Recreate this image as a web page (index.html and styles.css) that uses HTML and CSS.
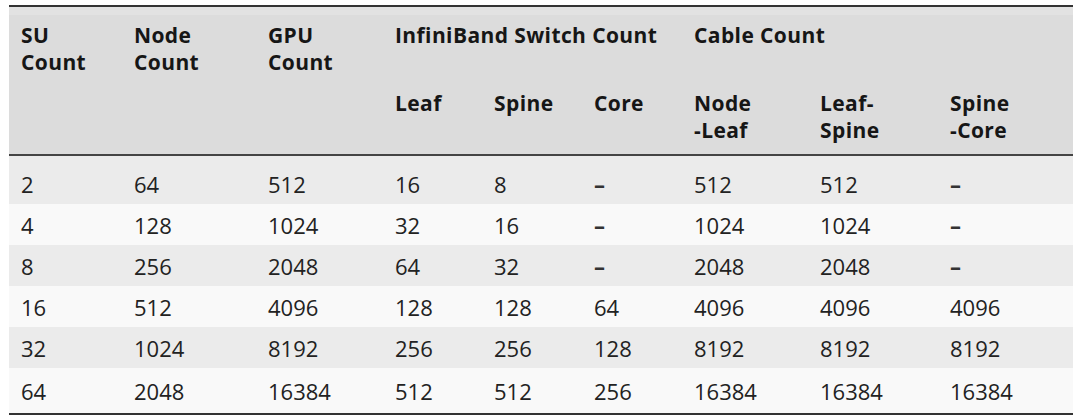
FILE: index.html
```html
<!DOCTYPE html>
<html>
<head>
<meta charset="utf-8">
<link rel="stylesheet" href="styles.css">
</head>
<body>
<table class="grid">
  <colgroup>
    <col class="c1"><col class="c2"><col class="c3"><col class="c4"><col class="c5"><col class="c6"><col class="c7"><col class="c8"><col class="c9">
  </colgroup>
  <thead>
    <tr class="h1">
      <th rowspan="2" class="stack">SU<br>Count</th>
      <th rowspan="2" class="stack">Node<br>Count</th>
      <th rowspan="2" class="stack">GPU<br>Count</th>
      <th colspan="3">InfiniBand Switch Count</th>
      <th colspan="3">Cable Count</th>
    </tr>
    <tr class="h2">
      <th>Leaf</th>
      <th>Spine</th>
      <th>Core</th>
      <th>Node<br>-Leaf</th>
      <th>Leaf-<br>Spine</th>
      <th>Spine<br>-Core</th>
    </tr>
  </thead>
  <tbody>
    <tr class="first"><td>2</td><td>64</td><td>512</td><td>16</td><td>8</td><td class="dash">–</td><td>512</td><td>512</td><td class="dash">–</td></tr>
    <tr><td>4</td><td>128</td><td>1024</td><td>32</td><td>16</td><td class="dash">–</td><td>1024</td><td>1024</td><td class="dash">–</td></tr>
    <tr><td>8</td><td>256</td><td>2048</td><td>64</td><td>32</td><td class="dash">–</td><td>2048</td><td>2048</td><td class="dash">–</td></tr>
    <tr><td>16</td><td>512</td><td>4096</td><td>128</td><td>128</td><td>64</td><td>4096</td><td>4096</td><td>4096</td></tr>
    <tr><td>32</td><td>1024</td><td>8192</td><td>256</td><td>256</td><td>128</td><td>8192</td><td>8192</td><td>8192</td></tr>
    <tr class="last"><td>64</td><td>2048</td><td>16384</td><td>512</td><td>512</td><td>256</td><td>16384</td><td>16384</td><td>16384</td></tr>
  </tbody>
</table>
</body>
</html>
```
FILE: styles.css
```css
html, body {
  margin: 0;
  padding: 0;
  background: #ffffff;
}
body {
  padding: 5px 0 0 9px;
  font-family: "Open Sans", "Liberation Sans", sans-serif;
  color: #1c1c1c;
}
.grid {
  border-collapse: collapse;
  table-layout: fixed;
  width: 1064px;
  border-top: 2px solid #333333;
  border-bottom: 2px solid #333333;
}
.c1 { width: 113px; }
.c2 { width: 134px; }
.c3 { width: 127px; }
.c4 { width: 99px; }
.c5 { width: 100px; }
.c6 { width: 100px; }
.c7 { width: 126px; }
.c8 { width: 130px; }
.c9 { width: 135px; }
thead th {
  background: #dcdcdc;
  text-align: left;
  vertical-align: top;
  font-weight: 700;
  font-size: 21px;
  letter-spacing: 0.4px;
  line-height: 27px;
  padding: 0 12px;
  color: #161616;
}
.h1 { height: 80px; }
.h2 { height: 69px; }
.h1 th {
  padding-top: 15px;
  background: linear-gradient(#e2e2e2 0, #e2e2e2 8px, #dcdcdc 8px);
}
.h2 th {
  padding-top: 4px;
}
thead th.stack,
thead tr.h2 th {
  border-bottom: 2px solid #444444;
}
tbody td {
  font-size: 22px;
  line-height: 28px;
  padding: 7px 12px 6px;
  height: 28px;
  color: #222222;
}
tbody td.dash {
  font-weight: 700;
  color: #333333;
}
tbody tr:nth-child(odd) td { background: #ebebeb; }
tbody tr:nth-child(even) td { background: #f9f9f9; }
tbody tr.first td { padding-top: 14px; }
tbody tr.last td { padding-top: 9px; padding-bottom: 8px; }
```
